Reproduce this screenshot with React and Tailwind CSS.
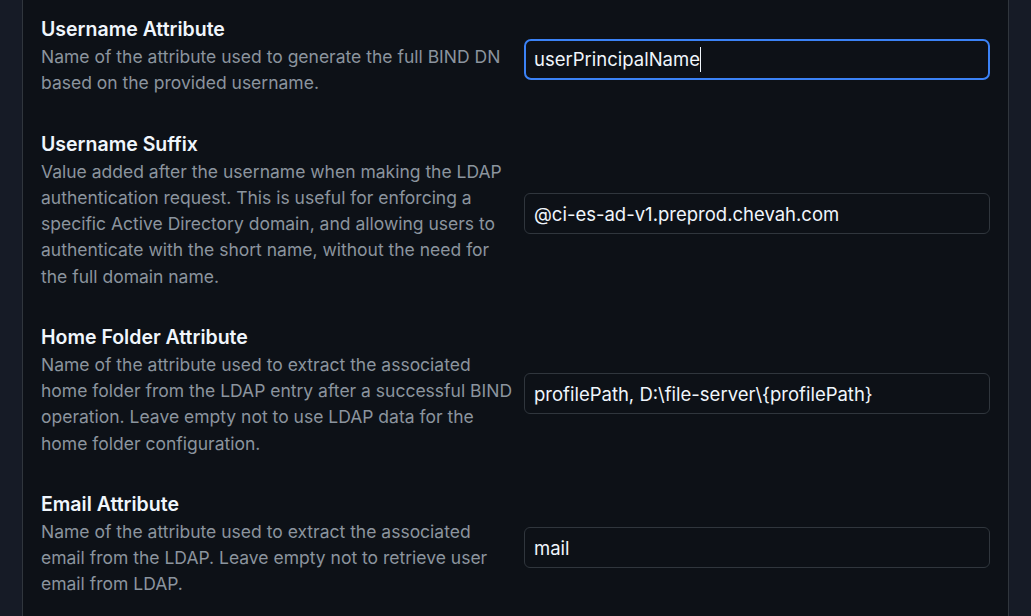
import React from 'react';

const fields = [
    {
        title: 'Username Attribute',
        desc: 'Name of the attribute used to generate the full BIND DN based on the provided username.',
        value: 'userPrincipalName',
        focused: true,
    },
    {
        title: 'Username Suffix',
        desc: 'Value added after the username when making the LDAP authentication request. This is useful for enforcing a specific Active Directory domain, and allowing users to authenticate with the short name, without the need for the full domain name.',
        value: '@ci-es-ad-v1.preprod.chevah.com',
    },
    {
        title: 'Home Folder Attribute',
        desc: 'Name of the attribute used to extract the associated home folder from the LDAP entry after a successful BIND operation. Leave empty not to use LDAP data for the home folder configuration.',
        value: 'profilePath, D:\\file-server\\{profilePath}',
    },
    {
        title: 'Email Attribute',
        desc: 'Name of the attribute used to extract the associated email from the LDAP. Leave empty not to retrieve user email from LDAP.',
        value: 'mail',
    },
];

const FieldRow = ({ title, desc, value, focused }) => (
    <div className="grid grid-cols-[472px_1fr] gap-[11px] items-center">
        <div>
            <h3 className="text-[19.5px] leading-[29px] font-semibold text-[#f0f6fc]">{title}</h3>
            <p className="text-[17.5px] leading-[26.25px] text-[#8b949e]">{desc}</p>
        </div>
        <div className="mt-[8px]">
            {focused ? (
                <div className="h-[41px] flex items-center rounded-[7px] border-2 border-[#3b82f6] bg-[#0d1117] px-[8px] text-[18.5px] text-[#f0f6fc]">
                    <span>{value}</span>
                    <span className="w-px h-[25px] bg-[#f0f6fc]"></span>
                </div>
            ) : (
                <input
                    type="text"
                    defaultValue={value}
                    className="w-full h-[41px] rounded-[6px] border border-[#30363d] bg-[#0d1117] px-[9px] text-[18.5px] text-[#f0f6fc] focus:outline-none"
                />
            )}
        </div>
    </div>
);

const App = () => {
    return (
        <div className="h-[616px] overflow-hidden bg-[#161b26] px-[22px] font-['Inter',sans-serif]">
            <div className="h-full border-x border-[#30363d] bg-[#0d1117] px-[18px] pt-[15px]">
                <div className="flex flex-col gap-[33px]">
                    {fields.map((f) => (
                        <FieldRow key={f.title} {...f} />
                    ))}
                </div>
            </div>
        </div>
    );
};

export default App;
